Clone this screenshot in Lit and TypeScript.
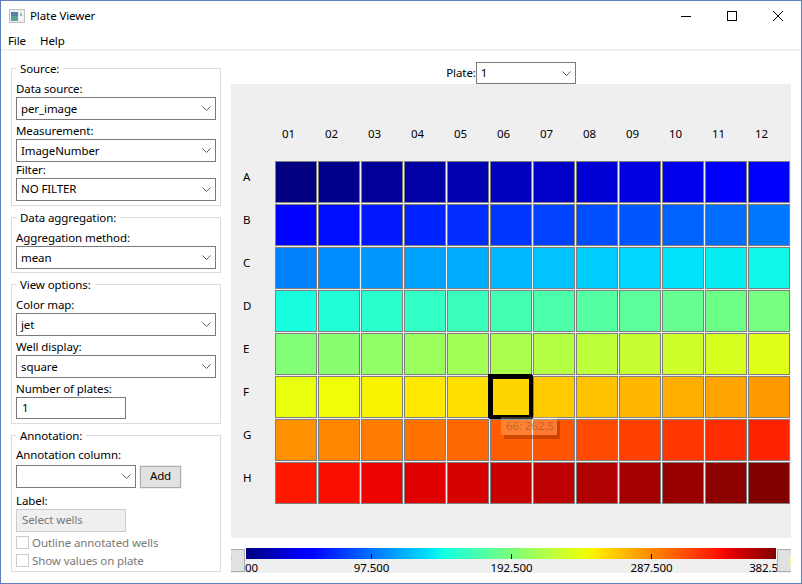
import { LitElement, html, css, svg } from 'lit';
import { customElement } from 'lit/decorators.js';

const ROWS = 'ABCDEFGH'.split('');
const COLS = ['01', '02', '03', '04', '05', '06', '07', '08', '09', '10', '11', '12'];
const SELECTED = 65;

// Piecewise linear lookup, same knots as the matplotlib jet table
function lerp(t: number, knots: number[][]): number {
  for (let i = 1; i < knots.length; i++) {
    if (t <= knots[i][0]) {
      const [x0, y0] = knots[i - 1];
      const [x1, y1] = knots[i];
      return y0 + ((t - x0) / (x1 - x0)) * (y1 - y0);
    }
  }
  return knots[knots.length - 1][1];
}

function jet(t: number): string {
  const r = lerp(t, [[0, 0], [0.35, 0], [0.66, 1], [0.89, 1], [1, 0.5]]);
  const g = lerp(t, [[0, 0], [0.125, 0], [0.375, 1], [0.64, 1], [0.91, 0], [1, 0]]);
  const b = lerp(t, [[0, 0.5], [0.11, 1], [0.34, 1], [0.65, 0], [1, 0]]);
  return `rgb(${Math.round(r * 255)},${Math.round(g * 255)},${Math.round(b * 255)})`;
}

const chevron = html`<svg class="chevron" width="9" height="5" viewBox="0 0 9 5">
  <path d="M0.5 0.5 L4.5 4.5 L8.5 0.5" fill="none" stroke="#606060" stroke-width="1" />
</svg>`;

const appIcon = svg`
  <rect x="0.5" y="0.5" width="15" height="13" fill="#ededed" stroke="#c2c2c2" />
  <rect x="2" y="3" width="7" height="9" fill="#5aa39a" />
  <rect x="2" y="3" width="7" height="4" fill="#5482a8" />
  <rect x="10" y="3" width="4" height="9" fill="#f4f6f5" />
  <rect x="11" y="4" width="2" height="3" fill="#8fbfae" />
`;

@customElement('app-root')
export class AppRoot extends LitElement {
  static styles = css`
    :host {
      display: block;
      width: 802px;
      height: 584px;
      box-sizing: border-box;
      border: 1px solid #5b7fbf;
      background: #fff;
      font-family: 'Noto Sans', sans-serif;
      font-size: 11.5px;
      letter-spacing: -0.1px;
      line-height: 14px;
      color: #000;
      overflow: hidden;
      position: relative;
    }

    .titlebar {
      display: flex;
      align-items: center;
      height: 29px;
      padding-left: 8px;
    }
    .titlebar .title {
      margin-left: 5px;
      flex: 1;
    }
    .win-btn {
      width: 46px;
      height: 29px;
      display: flex;
      align-items: center;
      justify-content: center;
    }

    .menubar {
      display: flex;
      gap: 14px;
      height: 17px;
      padding: 2px 0 0 7px;
      align-items: center;
      border-bottom: 2px solid #f0f0f0;
    }

    .body {
      display: flex;
      gap: 10px;
      padding-left: 10px;
    }

    .sidebar {
      width: 210px;
      padding-top: 17px;
      display: flex;
      flex-direction: column;
      gap: 11px;
    }

    .group {
      position: relative;
      border: 1px solid #dcdcdc;
      padding: 13px 4px 4px;
    }
    .group.aggregation {
      height: 56px;
      box-sizing: border-box;
    }
    .legend {
      position: absolute;
      top: -7px;
      left: 4px;
      padding: 0 4px;
      background: #fff;
    }

    .field {
      display: flex;
      flex-direction: column;
      margin-top: 4px;
    }
    .field:first-of-type {
      margin-top: 0;
    }
    .field.tight {
      margin-top: 1px;
    }
    .field label,
    .column-label {
      display: block;
      height: 14px;
      margin-bottom: 1px;
    }
    .column-label {
      line-height: 12px;
      margin-bottom: 0;
    }

    .select {
      height: 23px;
      box-sizing: border-box;
      border: 1px solid #7a7a7a;
      display: flex;
      align-items: center;
      justify-content: space-between;
      padding: 0 4px;
      background: #fff;
    }
    .tight .select {
      padding: 0 4px 2px;
    }
    .tight .select .chevron {
      margin-top: 2px;
    }
    .select.narrow {
      width: 120px;
    }
    .input {
      width: 110px;
      height: 22px;
      box-sizing: border-box;
      border: 1px solid #7a7a7a;
      display: flex;
      align-items: center;
      padding: 0 5px;
    }

    .annotation-row {
      display: flex;
      gap: 4px;
      margin-top: 2px;
      height: 24px;
    }
    .add {
      width: 41px;
      height: 22px;
      box-sizing: border-box;
      margin-top: 1px;
      padding-bottom: 2px;
      border: 1px solid #adadad;
      box-shadow: 0 0 0 1px #efefef;
      background: #e1e1e1;
      display: flex;
      align-items: center;
      justify-content: center;
    }
    .label-title {
      height: 14px;
      margin-top: 5px;
      margin-bottom: 1px;
    }
    .disabled-btn {
      width: 110px;
      height: 23px;
      box-sizing: border-box;
      border: 1px solid #cccccc;
      background: #efefef;
      color: #787878;
      display: flex;
      align-items: center;
      padding: 0 5px 2px;
    }
    .check {
      display: flex;
      align-items: center;
      gap: 3px;
      height: 13px;
      margin-top: 5px;
      color: #787878;
    }
    .check.first {
      margin-top: 4px;
    }
    .check i {
      width: 13px;
      height: 13px;
      box-sizing: border-box;
      border: 1px solid #cccccc;
      background: #fff;
    }
    .check span {
      padding-top: 1px;
    }

    .main {
      width: 560px;
      padding-top: 11px;
      display: flex;
      flex-direction: column;
    }
    .plate-row {
      height: 22px;
      display: flex;
      align-items: center;
      justify-content: center;
    }
    .plate-row .select {
      width: 100px;
      height: 22px;
    }

    .plot {
      height: 454px;
      background: #efefef;
      display: grid;
      grid-template-columns: 43px repeat(12, 42px);
      grid-template-rows: 76px repeat(8, 42px);
      gap: 1px;
      align-content: start;
    }
    .col-label {
      padding: 43px 0 0 7px;
    }
    .row-label {
      padding: 9px 0 0 12px;
    }
    .well {
      box-sizing: border-box;
      border: 1px solid #808080;
      position: relative;
    }
    .well.selected {
      border: 3px solid #000;
      box-shadow: 0 0 0 1px #000, -1px -1px 0 1px #000;
      z-index: 2;
    }
    .tooltip {
      position: absolute;
      left: 8px;
      top: 38px;
      width: 56px;
      height: 18px;
      box-sizing: border-box;
      padding: 2px 0 0 5px;
      white-space: nowrap;
      background: rgba(255, 255, 225, 0.22);
      color: rgba(90, 60, 40, 0.4);
      box-shadow: 3px 4px 0 rgba(90, 30, 0, 0.3);
    }

    .colorbar {
      position: relative;
      margin-top: 10px;
      height: 25px;
    }
    .gradient {
      height: 11px;
      margin: 0 15px;
    }
    .axis {
      position: relative;
      height: 14px;
      background: #efefef;
    }
    .axis span {
      position: absolute;
      top: 0;
      line-height: 18px;
      transform: translateX(-50%);
    }
    .axis span.start {
      transform: none;
      clip-path: inset(0 0 0 2px);
    }
    .axis span.end {
      transform: translateX(-100%);
    }
    .tick {
      position: absolute;
      top: 6px;
      width: 1px;
      height: 5px;
      background: #000;
    }
    .handle {
      position: absolute;
      top: 1px;
      width: 14px;
      height: 23px;
      box-sizing: border-box;
      background: #e1e1e1;
      border: 1px solid #adadad;
      z-index: 1;
    }
    .handle.left {
      left: 0;
      border-left: 0;
    }
    .handle.right {
      right: 0;
      border-right: 0;
    }
    .handle.left::after {
      content: '';
      position: absolute;
      left: 0;
      top: 5px;
      width: 1px;
      height: 6px;
      background: #8fe8e8;
    }
    .handle.right::after {
      content: '';
      position: absolute;
      right: 0;
      top: 6px;
      width: 2px;
      height: 10px;
      background: #f3f39a;
    }

    .watermark {
      position: absolute;
      left: 32px;
      top: 219px;
      font-size: 30px;
      letter-spacing: -2.5px;
      line-height: 36px;
      font-weight: 700;
      color: rgba(0, 0, 0, 0.025);
      white-space: nowrap;
      pointer-events: none;
    }
  `;

  private field(name: string, value: string, tight = false) {
    return html`<div class="field ${tight ? 'tight' : ''}">
      <label>${name}</label>
      <div class="select"><span>${value}</span>${chevron}</div>
    </div>`;
  }

  private renderTitlebar() {
    return html`<div class="titlebar">
      <svg width="16" height="14" viewBox="0 0 16 14">${appIcon}</svg>
      <span class="title">Plate Viewer</span>
      <div class="win-btn">
        <svg width="10" height="10" viewBox="0 0 10 10"><path d="M0 5.5H10" stroke="#000" /></svg>
      </div>
      <div class="win-btn">
        <svg width="10" height="10" viewBox="0 0 10 10"><rect x="0.5" y="0.5" width="9" height="9" fill="none" stroke="#000" /></svg>
      </div>
      <div class="win-btn">
        <svg width="10" height="10" viewBox="0 0 10 10"><path d="M0 0L10 10M10 0L0 10" stroke="#000" stroke-width="1" /></svg>
      </div>
    </div>`;
  }

  private renderSidebar() {
    return html`<div class="sidebar">
      <div class="group">
        <span class="legend">Source:</span>
        ${this.field('Data source:', 'per_image')}
        ${this.field('Measurement:', 'ImageNumber')}
        ${this.field('Filter:', 'NO FILTER', true)}
      </div>
      <div class="group aggregation">
        <span class="legend">Data aggregation:</span>
        ${this.field('Aggregation method:', 'mean')}
      </div>
      <div class="group">
        <span class="legend">View options:</span>
        ${this.field('Color map:', 'jet')}
        ${this.field('Well display:', 'square')}
        <div class="field">
          <label>Number of plates:</label>
          <div class="input">1</div>
        </div>
      </div>
      <div class="group">
        <span class="legend">Annotation:</span>
        <div class="column-label">Annotation column:</div>
        <div class="annotation-row">
          <div class="select narrow"><span></span>${chevron}</div>
          <div class="add">Add</div>
        </div>
        <div class="label-title">Label:</div>
        <div class="disabled-btn">Select wells</div>
        <div class="check first"><i></i><span>Outline annotated wells</span></div>
        <div class="check"><i></i><span>Show values on plate</span></div>
      </div>
    </div>`;
  }

  private renderPlot() {
    return html`<div class="plot">
      <div></div>
      ${COLS.map((c) => html`<div class="col-label">${c}</div>`)}
      ${ROWS.map(
        (r, ri) => html`
          <div class="row-label">${r}</div>
          ${COLS.map((_, ci) => {
            const idx = ri * 12 + ci;
            const sel = idx === SELECTED;
            return html`<div class="well ${sel ? 'selected' : ''}" style="background:${jet(idx / 95)}">
              ${sel ? html`<div class="tooltip">66: 262.5</div>` : ''}
            </div>`;
          })}
        `,
      )}
    </div>`;
  }

  private renderColorbar() {
    const stops = Array.from({ length: 65 }, (_, i) => jet(i / 64)).join(',');
    const ticks = [
      { x: 140.5, text: '97.500' },
      { x: 280.5, text: '192.500' },
      { x: 420.5, text: '287.500' },
    ];
    return html`<div class="colorbar">
      <div class="gradient" style="background:linear-gradient(to right,${stops})"></div>
      <div class="axis">
        <span class="start" style="left:-2px">2.500</span>
        ${ticks.map((t) => html`<span style="left:${t.x}px">${t.text}</span>`)}
        <span class="end" style="left:560px">382.500</span>
      </div>
      ${ticks.map((t) => html`<div class="tick" style="left:${t.x - 0.5}px"></div>`)}
      <div class="handle left"></div>
      <div class="handle right"></div>
    </div>`;
  }

  render() {
    return html`
      ${this.renderTitlebar()}
      <div class="menubar"><span>File</span><span>Help</span></div>
      <div class="body">
        ${this.renderSidebar()}
        <div class="main">
          <div class="plate-row">
            <span>Plate:</span>
            <div class="select"><span>1</span>${chevron}</div>
          </div>
          ${this.renderPlot()}
          ${this.renderColorbar()}
        </div>
      </div>
      <div class="watermark">SOFTPEDIA®</div>
    `;
  }
}

declare global {
  interface HTMLElementTagNameMap {
    'app-root': AppRoot;
  }
}
